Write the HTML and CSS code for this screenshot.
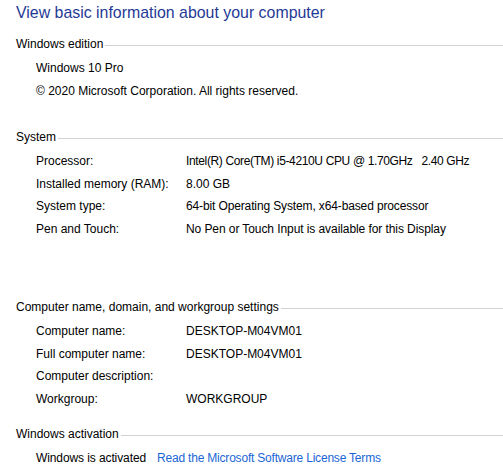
FILE: index.html
```html
<!DOCTYPE html>
<html>
<head>
<meta charset="utf-8">
<link rel="stylesheet" href="styles.css">
</head>
<body>
<div class="page">
  <h1 class="title">View basic information about your computer</h1>

  <section class="sec sec-edition">
    <div class="head"><span>Windows edition</span></div>
    <div class="row"><span class="full">Windows 10 Pro</span></div>
    <div class="row"><span class="full">© 2020 Microsoft Corporation. All rights reserved.</span></div>
  </section>

  <section class="sec sec-system">
    <div class="head"><span>System</span></div>
    <div class="row"><span class="lbl">Processor:</span><span class="val tight">Intel(R) Core(TM) i5-4210U CPU @ 1.70GHz&nbsp;&nbsp; 2.40 GHz</span></div>
    <div class="row"><span class="lbl">Installed memory (RAM):</span><span class="val">8.00 GB</span></div>
    <div class="row"><span class="lbl">System type:</span><span class="val snug">64-bit Operating System, x64-based processor</span></div>
    <div class="row"><span class="lbl">Pen and Touch:</span><span class="val snug2">No Pen or Touch Input is available for this Display</span></div>
  </section>

  <section class="sec sec-name">
    <div class="head"><span>Computer name, domain, and workgroup settings</span></div>
    <div class="row"><span class="lbl">Computer name:</span><span class="val">DESKTOP-M04VM01</span></div>
    <div class="row"><span class="lbl">Full computer name:</span><span class="val">DESKTOP-M04VM01</span></div>
    <div class="row"><span class="lbl">Computer description:</span><span class="val"></span></div>
    <div class="row"><span class="lbl">Workgroup:</span><span class="val">WORKGROUP</span></div>
  </section>

  <section class="sec sec-activation">
    <div class="head"><span>Windows activation</span></div>
    <div class="row"><span class="act">Windows is activated</span><a class="link" href="#">Read the Microsoft Software License Terms</a></div>
  </section>
</div>
</body>
</html>
```

FILE: styles.css
```css
html, body {
  margin: 0;
  padding: 0;
  background: #ffffff;
}

.page {
  font-family: "Liberation Sans", Arial, sans-serif;
  font-size: 12px;
  color: #000000;
  padding-top: 3px;
  width: 503px;
  overflow: hidden;
}

.title {
  margin: 0 0 0 16px;
  font-size: 15.9px;
  font-weight: normal;
  line-height: 20px;
  color: #1f3a96;
}

.sec { margin: 0; }
.sec-edition { margin-top: 14px; }
.sec-system { margin-top: 28px; }
.sec-name { margin-top: 59.6px; }
.sec-activation { margin-top: 16.6px; }

.head {
  display: flex;
  align-items: center;
  margin-left: 16px;
  line-height: 14px;
  height: 14px;
  margin-bottom: 6px;
}

.head::after {
  content: "";
  flex: 1;
  border-top: 1px solid #d2d2d2;
  margin-left: 2px;
  margin-top: 2px;
}

.row {
  display: flex;
  padding-left: 36px;
  line-height: 22.6px;
  height: 22.6px;
  white-space: nowrap;
}

.lbl { width: 150px; flex: none; }
.val { flex: none; }
.tight { letter-spacing: -0.36px; }
.snug { letter-spacing: -0.13px; }
.snug2 { letter-spacing: -0.08px; }

.act { margin-right: 11px; letter-spacing: -0.1px; }

.link {
  color: #1a66d6;
  text-decoration: none;
  letter-spacing: -0.2px;
}
```
